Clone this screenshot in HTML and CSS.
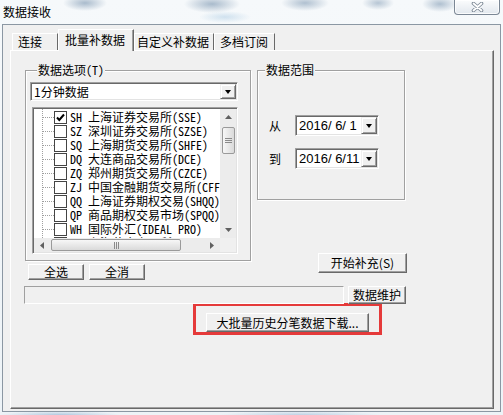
FILE: index.html
```html
<!DOCTYPE html>
<html lang="zh-CN">
<head>
    <meta charset="UTF-8">
    <title>数据接收</title>
    <link rel="stylesheet" href="styles.css">
</head>
<body>
    <div class="window">
        <!-- title bar -->
        <div class="titlebar">
            <span class="title">数据接收</span>
            <div class="close-btn">
                <svg width="13" height="10" viewBox="0 0 13 10">
                    <path d="M2.5 1.5 L10.5 8.5 M10.5 1.5 L2.5 8.5" stroke="#7d8996" stroke-width="3.6" stroke-linecap="round"/>
                    <path d="M2.5 1.5 L10.5 8.5 M10.5 1.5 L2.5 8.5" stroke="#fff" stroke-width="1.8" stroke-linecap="round"/>
                </svg>
            </div>
        </div>

        <div class="client">
            <!-- tabs -->
            <div class="tabs">
                <div class="tab">连接</div>
                <div class="tab active">批量补数据</div>
                <div class="tab">自定义补数据</div>
                <div class="tab">多档订阅</div>
            </div>

            <div class="panel">
                <div class="top-row">
                    <div class="left-col">
                        <div class="group options">
                            <span class="group-title mono">数据选项(T)</span>
                            <div class="combo">
                                <span>1分钟数据</span>
                                <span class="drop"><span class="tri-down"></span></span>
                            </div>
                            <div class="tree">
                                <div class="tree-list">
                                    <div class="tree-items mono">
                                        <div class="tree-row"><span class="branch"></span><span class="check checked"><svg width="11" height="11" viewBox="0 0 11 11"><path d="M2 5.5 L4.3 8 L9 2.5" stroke="#000" stroke-width="2" fill="none"/></svg></span>SH 上海证券交易所(SSE)</div>
                                        <div class="tree-row"><span class="branch"></span><span class="check"></span>SZ 深圳证券交易所(SZSE)</div>
                                        <div class="tree-row"><span class="branch"></span><span class="check"></span>SQ 上海期货交易所(SHFE)</div>
                                        <div class="tree-row"><span class="branch"></span><span class="check"></span>DQ 大连商品交易所(DCE)</div>
                                        <div class="tree-row"><span class="branch"></span><span class="check"></span>ZQ 郑州期货交易所(CZCE)</div>
                                        <div class="tree-row"><span class="branch"></span><span class="check"></span>ZJ 中国金融期货交易所(CFFEX)</div>
                                        <div class="tree-row"><span class="branch"></span><span class="check"></span>QQ 上海证券期权交易(SHQQ)</div>
                                        <div class="tree-row"><span class="branch"></span><span class="check"></span>QP 商品期权交易市场(SPQQ)</div>
                                        <div class="tree-row"><span class="branch"></span><span class="check"></span>WH 国际外汇(IDEAL PRO)</div>
                                        <div class="tree-row"><span class="branch"></span><span class="check"></span>SG 上海黄金交易所(SGE)</div>
                                    </div>
                                </div>
                                <div class="vscroll">
                                    <span class="sb-btn"><svg width="7" height="4"><path d="M0 4 L3.5 0 L7 4Z" fill="#606060"/></svg></span>
                                    <span class="vthumb"><svg width="7" height="7"><path d="M0 1.5 H7 M0 3.5 H7 M0 5.5 H7" stroke="#8a8a8a"/></svg></span>
                                    <span class="sb-fill"></span>
                                    <span class="sb-btn"><svg width="7" height="4"><path d="M0 0 L3.5 4 L7 0Z" fill="#606060"/></svg></span>
                                </div>
                                <div class="hscroll">
                                    <span class="sb-btn"><svg width="4" height="7"><path d="M4 0 L0 3.5 L4 7Z" fill="#606060"/></svg></span>
                                    <span class="hthumb"><svg width="7" height="7"><path d="M1.5 0 V7 M3.5 0 V7 M5.5 0 V7" stroke="#8a8a8a"/></svg></span>
                                    <span class="sb-fill"></span>
                                    <span class="sb-btn"><svg width="4" height="7"><path d="M0 0 L4 3.5 L0 7Z" fill="#606060"/></svg></span>
                                </div>
                                <div class="corner"></div>
                            </div>
                        </div>
                        <div class="buttons-row">
                            <button class="btn small">全选</button>
                            <button class="btn small">全消</button>
                        </div>
                    </div>

                    <div class="right-col">
                        <div class="group range">
                            <span class="group-title">数据范围</span>
                            <div class="date-row first">
                                <span class="date-label">从</span>
                                <div class="date"><span>2016/ 6/ 1</span><span class="drop"><span class="tri-down"></span></span></div>
                            </div>
                            <div class="date-row">
                                <span class="date-label">到</span>
                                <div class="date"><span>2016/ 6/11</span><span class="drop"><span class="tri-down"></span></span></div>
                            </div>
                        </div>
                        <button class="btn start">开始补充(S)</button>
                    </div>
                </div>

                <div class="status-row">
                    <div class="status-field"></div>
                    <button class="btn maintain">数据维护</button>
                </div>

                <div class="highlight">
                    <button class="btn download">大批量历史分笔数据下载...</button>
                </div>
            </div>
        </div>
    </div>
</body>
</html>
```

FILE: styles.css
```css
* {
    box-sizing: border-box;
}

body {
    margin: 0;
    width: 503px;
    height: 415px;
    overflow: hidden;
    font-family: "Noto Sans CJK SC", sans-serif;
    font-size: 12px;
    color: #000;
    /* blurred aero glass behind the dialog */
    background:
        radial-gradient(ellipse 22px 8px at 85px 3px, rgba(105, 135, 165, .55), transparent),
        radial-gradient(ellipse 28px 9px at 212px 4px, rgba(105, 135, 165, .55), transparent),
        radial-gradient(ellipse 26px 6px at 225px 17px, rgba(150, 190, 220, .4), transparent),
        radial-gradient(ellipse 24px 8px at 305px 3px, rgba(105, 135, 165, .5), transparent),
        radial-gradient(ellipse 16px 7px at 378px 3px, rgba(105, 135, 165, .45), transparent),
        radial-gradient(ellipse 18px 8px at 440px 4px, rgba(105, 135, 165, .5), transparent),
        radial-gradient(ellipse 60px 4px at 60px 415px, rgba(120, 160, 200, .5), transparent),
        radial-gradient(ellipse 80px 4px at 300px 415px, rgba(120, 160, 200, .4), transparent),
        linear-gradient(#f6f9fb, #edf3f7);
}

.mono {
    font-family: "Noto Sans Mono CJK SC", "Noto Sans CJK SC", monospace;
}

.window {
    display: flex;
    flex-direction: column;
    width: 503px;
    height: 415px;
}

.titlebar {
    height: 24px;
    display: flex;
    justify-content: space-between;
    align-items: flex-start;
    padding: 0 3px 0 3px;
}

.title {
    line-height: 24px;
}

.close-btn {
    width: 46px;
    height: 15px;
    border: 1px solid #7b8795;
    border-top: none;
    border-radius: 0 0 4px 4px;
    background: linear-gradient(#fbfcfd, #e2e8ee);
    box-shadow: inset 0 0 0 1px rgba(255, 255, 255, .8);
    display: flex;
    align-items: center;
    justify-content: center;
}

.client {
    margin-left: 2px;
    width: 499px;
    height: 388px;
    border: 1px solid #8b97a3;
    background: #f0f0f0;
    padding: 4px 6px 0 7px;
}

/* tab strip */
.tabs {
    display: flex;
    align-items: flex-end;
    height: 21px;
    padding-left: 2px;
}

.tab {
    height: 17px;
    line-height: 16px;
    padding-left: 5px;
    border-top: 1px solid #fff;
    border-left: 1px solid #fff;
    border-right: 1px solid #696969;
    white-space: nowrap;
}

.tab:nth-child(1) { width: 46px; }
.tab:nth-child(2) { width: 76px; }
.tab:nth-child(3) { width: 80px; padding-left: 2px; }
.tab:nth-child(4) { width: 61px; }

.tab.active {
    height: 22px;
    line-height: 20px;
    padding-left: 6px;
    margin-bottom: -1px;
    background: #f0f0f0;
    position: relative;
    z-index: 1;
    box-shadow: inset -1px 0 #a0a0a0;
}

.panel {
    width: 484px;
    height: 359px;
    border: 1px solid;
    border-color: #fff #696969 #696969 #fff;
    box-shadow: inset -1px -1px #a0a0a0;
    padding: 19px 0 0 14px;
}

.top-row {
    display: flex;
    gap: 6px;
}

.left-col {
    display: flex;
    flex-direction: column;
    width: 226px;
}

.right-col {
    display: flex;
    flex-direction: column;
    width: 150px;
}

/* etched group box */
.group {
    display: flex;
    flex-direction: column;
    border: 1px solid #a0a0a0;
    box-shadow: inset 1px 1px #fff, 1px 1px #fff;
}

.group-title {
    align-self: flex-start;
    margin: -8px 0 0 7px;
    padding: 0 1px;
    line-height: 14px;
    background: #f0f0f0;
}

.options {
    height: 191px;
    padding-left: 4px;
}

.range {
    width: 148px;
    height: 130px;
}

/* sunken white fields */
.combo,
.date,
.tree {
    border: 1px solid;
    border-color: #a0a0a0 #fff #fff #a0a0a0;
    box-shadow: inset 1px 1px #696969, inset -1px -1px #e3e3e3;
    background: #fff;
}

.combo {
    width: 208px;
    height: 19px;
    margin-top: 5px;
    display: flex;
    align-items: center;
    justify-content: space-between;
    padding: 0 1px 0 3px;
    line-height: 15px;
}

.drop {
    width: 16px;
    height: 15px;
    display: flex;
    align-items: center;
    justify-content: center;
    background: #f0f0f0;
    border: 1px solid;
    border-color: #f0f0f0 #696969 #696969 #f0f0f0;
    box-shadow: inset 1px 1px #fff, inset -1px -1px #a0a0a0;
}

.tri-down {
    width: 0;
    height: 0;
    border-left: 3.5px solid transparent;
    border-right: 3.5px solid transparent;
    border-top: 4px solid #000;
}

/* tree view */
.tree {
    width: 206px;
    height: 147px;
    margin: 6px 0 0 2px;
    padding: 1px;
    display: grid;
    grid-template-columns: 1fr 16px;
    grid-template-rows: 1fr 14px;
}

.tree-list {
    overflow: hidden;
}

.tree-items {
    height: 100%;
    margin-left: 8px;
    padding-top: 1px;
    border-left: 1px dotted #a0a0a0;
}

.tree-row {
    display: flex;
    align-items: center;
    height: 14px;
    line-height: 14px;
    white-space: pre;
}

.branch {
    flex: none;
    width: 11px;
    border-top: 1px dotted #a0a0a0;
}

.check {
    flex: none;
    width: 13px;
    height: 13px;
    margin-right: 3px;
    border: 1px solid #444;
    background: #fff;
    display: flex;
    align-items: center;
    justify-content: center;
}

/* scrollbars */
.vscroll,
.hscroll {
    display: flex;
    background: #ececec;
}

.vscroll {
    flex-direction: column;
}

.sb-btn {
    flex: none;
    width: 16px;
    height: 16px;
    display: flex;
    align-items: center;
    justify-content: center;
}

.hscroll .sb-btn {
    height: 14px;
}

.sb-fill {
    flex: 1;
}

.vthumb,
.hthumb {
    display: flex;
    align-items: center;
    justify-content: center;
    border: 1px solid #9a9a9a;
    border-radius: 2px;
}

.vthumb {
    height: 27px;
    margin: 2px 1px 0 2px;
    background: linear-gradient(90deg, #f7f7f7, #dadada);
}

.hthumb {
    width: 130px;
    margin: 1px 0 1px 1px;
    background: linear-gradient(#f7f7f7, #dadada);
}

.corner {
    background: #f0f0f0;
}

/* classic push buttons */
.btn {
    padding: 0;
    font-family: "Noto Sans CJK SC", sans-serif;
    font-size: 12px;
    color: #000;
    background: #f0f0f0;
    border: 1px solid;
    border-color: #fff #696969 #696969 #fff;
    box-shadow: inset -1px -1px #a0a0a0;
    line-height: 1;
}

.buttons-row {
    display: flex;
    gap: 5px;
    margin: 3px 0 0 3px;
}

.small {
    width: 56px;
    height: 16px;
}

.date-row {
    display: flex;
    align-items: center;
    margin-top: 12px;
    line-height: 15px;
}

.date-row.first {
    margin-top: 38px;
}

.date-label {
    width: 12px;
    margin: 0 14px 0 11px;
}

.date {
    width: 84px;
    height: 21px;
    display: flex;
    align-items: center;
    justify-content: space-between;
    padding: 0 1px 0 3px;
    font-family: "Liberation Sans", sans-serif;
    font-size: 13px;
    white-space: pre;
}

.date .drop {
    height: 17px;
}

.start {
    align-self: flex-end;
    width: 89px;
    height: 20px;
    margin-top: 53px;
}

.status-row {
    display: flex;
    gap: 4px;
    margin: 6px 0 0 -1px;
}

.status-field {
    width: 320px;
    height: 18px;
    border: 1px solid;
    border-color: #a0a0a0 #fff #fff #a0a0a0;
}

.maintain {
    width: 58px;
    height: 18px;
}

.highlight {
    width: 189px;
    height: 32px;
    margin: -1px 0 0 168px;
    padding: 7px 0 0 10px;
    border: 3px solid #e53a3a;
}

.download {
    width: 163px;
    height: 19px;
}
```
